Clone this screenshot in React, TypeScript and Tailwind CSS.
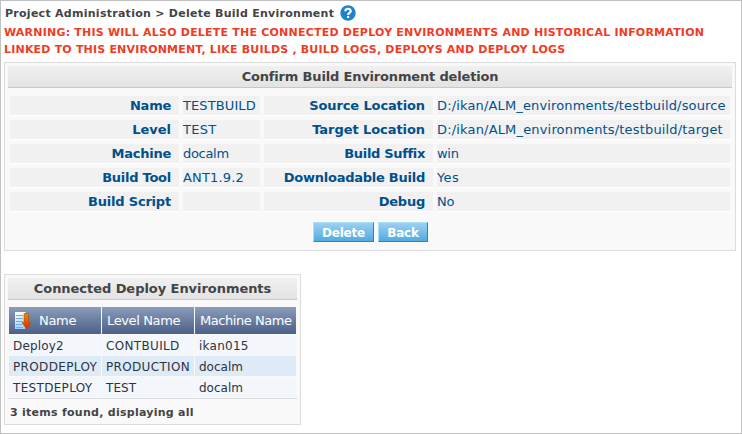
import React from 'react';

const font = 'font-["Verdana","DejaVu_Sans",sans-serif]';

type Text = [text: string, tracking: string];

const details: Text[][] = [
  [['Name', 'tracking-[-0.25px]'], ['TESTBUILD', 'tracking-[0.1px]'], ['Source Location', 'tracking-[-0.12px]'], ['D:/ikan/ALM_environments/testbuild/source', 'tracking-[0.15px]']],
  [['Level', 'tracking-[0px]'], ['TEST', 'tracking-[0.3px]'], ['Target Location', 'tracking-[-0.07px]'], ['D:/ikan/ALM_environments/testbuild/target', 'tracking-[0.17px]']],
  [['Machine', 'tracking-[-0.25px]'], ['docalm', 'tracking-[-0.3px]'], ['Build Suffix', 'tracking-[-0.33px]'], ['win', 'tracking-[-0.3px]']],
  [['Build Tool', 'tracking-[-0.25px]'], ['ANT1.9.2', 'tracking-[0.15px]'], ['Downloadable Build', 'tracking-[-0.25px]'], ['Yes', 'tracking-[0.4px]']],
  [['Build Script', 'tracking-[-0.2px]'], ['', 'tracking-[0px]'], ['Debug', 'tracking-[-0.25px]'], ['No', 'tracking-[-0.3px]']],
];

const deploys: Text[][] = [
  [['Deploy2', 'tracking-[0.15px]'], ['CONTBUILD', 'tracking-[0.33px]'], ['ikan015', 'tracking-[0.25px]']],
  [['PRODDEPLOY', 'tracking-[0.35px]'], ['PRODUCTION', 'tracking-[0.33px]'], ['docalm', 'tracking-[0px]']],
  [['TESTDEPLOY', 'tracking-[0.32px]'], ['TEST', 'tracking-[0.1px]'], ['docalm', 'tracking-[0px]']],
];

const columns: Text[] = [
  ['Name', 'tracking-[-0.3px]'],
  ['Level Name', 'tracking-[-0.37px]'],
  ['Machine Name', 'tracking-[-0.45px]'],
];

function PanelTitle({ children, tracking }: { children: React.ReactNode; tracking: string }) {
  return (
    <h2 className={`${tracking} flex h-[22px] items-center justify-center border-b border-[#c8c8c8] bg-linear-to-b from-[#f0f0f0] to-[#e3e3e3] text-[13px] font-bold text-[#444]`}>
      {children}
    </h2>
  );
}

function HelpIcon() {
  return (
    <svg width="16" height="16" viewBox="0 0 16 16" className="ml-[6px]">
      <circle cx="8" cy="8" r="7.7" fill="#1f83cc" />
      <path d="M5.3 6.2C5.4 2.9 10.8 3 10.7 6.1C10.6 7.9 8.1 7.9 8.1 10" fill="none" stroke="#fff" strokeWidth="2.2" />
      <rect x="7" y="11" width="2.2" height="2" fill="#fff" />
    </svg>
  );
}

function SortIcon() {
  return (
    <svg width="17" height="18" viewBox="0 0 17 18" className="ml-px">
      <defs>
        <linearGradient id="sheet" x1="0" y1="0" x2="0" y2="1">
          <stop offset="0" stopColor="#fff" />
          <stop offset="1" stopColor="#8fd4ff" />
        </linearGradient>
        <linearGradient id="arrow" x1="0" y1="0" x2="0" y2="1">
          <stop offset="0" stopColor="#e89000" />
          <stop offset="1" stopColor="#e32400" />
        </linearGradient>
      </defs>
      <rect x="0" y="0" width="10.5" height="17" fill="url(#sheet)" />
      <path d="M1 3.5H8M1 6.5H8M1 9.5H8M1 12.5H7M1 15.5H8" stroke="#7faadb" />
      <path d="M9 1.5H13.5V10.5H16L11.5 17L7 10.5H9Z" fill="url(#arrow)" stroke="#b94718" strokeWidth=".6" />
    </svg>
  );
}

function Label({ text: [text, tracking] }: { text: Text }) {
  return (
    <div className={`${tracking} flex h-5 items-center justify-end border-b border-white bg-[#f1f1f1] pr-2 text-[13px] font-bold text-[#00508c]`}>
      {text}
    </div>
  );
}

function Value({ text: [text, tracking] }: { text: Text }) {
  return (
    <div className={`${tracking} flex h-5 items-center border-b border-white bg-[#f1f1f1] text-[13px] text-[#00508c]`}>
      {text}
    </div>
  );
}

function Button({ children, size }: { children: string; size: string }) {
  return (
    <button
      className={`${size} flex h-5 items-center justify-center border border-t-[#a8e2f4] border-r-[#1b8acd] border-b-[#1b8acd] border-l-[#a8e2f4] bg-linear-to-b from-[#9bd0f2] to-[#50abe0] pt-px pl-px text-[12px] font-bold tracking-[-0.2px] text-white`}
    >
      {children}
    </button>
  );
}

export default function App() {
  return (
    <main className={`${font} h-[434px] w-[742px] border border-[#c0c0c0] bg-white pl-[3px] whitespace-nowrap`}>
      <header className="flex h-[23px] items-center pl-px text-[11px] font-bold text-[#444]">
        <span className="pt-[3px] tracking-[0.27px]">Project Administration &gt; Delete Build Environment</span>
        <HelpIcon />
      </header>
      <p className="h-[38px] text-[11px] leading-[17px] font-bold text-[#f03c23]">
        <span className="block tracking-[0.215px]">WARNING: THIS WILL ALSO DELETE THE CONNECTED DEPLOY ENVIRONMENTS AND HISTORICAL INFORMATION</span>
        <span className="block tracking-[0.19px]">LINKED TO THIS ENVIRONMENT, LIKE BUILDS , BUILD LOGS, DEPLOYS AND DEPLOY LOGS</span>
      </p>
      <section className="h-[189px] w-[732px] border border-[#dcdcdc] bg-[#f9f9f9] p-[3px]">
        <PanelTitle tracking="tracking-[-0.17px]">Confirm Build Environment deletion</PanelTitle>
        <div className="mt-2 ml-[2px] grid grid-cols-[169px_77px_169px_293px] gap-x-1 gap-y-1">
          {details.map((row) => (
            <React.Fragment key={row[0][0]}>
              <Label text={row[0]} />
              <Value text={row[1]} />
              <Label text={row[2]} />
              <Value text={row[3]} />
            </React.Fragment>
          ))}
        </div>
        <div className="mt-[10px] flex justify-center gap-1">
          <Button size="w-[61px]">Delete</Button>
          <Button size="w-[50px]">Back</Button>
        </div>
      </section>
      <section className="mt-[23px] h-[151px] w-[297px] border border-[#dcdcdc] bg-[#f9f9f9] p-[3px]">
        <PanelTitle tracking="tracking-[-0.05px]">Connected Deploy Environments</PanelTitle>
        <div className="mt-[7px] ml-px grid w-[287px] grid-cols-[92px_92px_101px] gap-x-px">
          {columns.map(([name, tracking], i) => (
            <div key={name} className={`${tracking} flex h-[27px] items-center gap-[7px] bg-linear-to-b from-[#8b9dba] to-[#4c6088] pt-px pl-[5px] text-[13px] text-white`}>
              {i === 0 && <SortIcon />}
              {name}
            </div>
          ))}
        </div>
        <div className="mt-px ml-px grid w-[287px] grid-cols-[92px_92px_101px] gap-px">
          {deploys.map((row, r) =>
            row.map(([cell, tracking], c) => (
              <div key={`${r}-${c}`} className={`${tracking} ${r === 1 ? 'bg-[#deebf6]' : 'bg-[#f3f7fc]'} flex h-5 items-center pt-px pl-1 text-[12px] text-[#2b3440]`}>
                {cell}
              </div>
            )),
          )}
        </div>
        <div className="mt-px border-t border-[#dcdcdc] pt-[6px] pl-[2px] text-[11px] leading-4 font-bold tracking-[0.27px] text-[#444]">3 items found, displaying all</div>
      </section>
    </main>
  );
}
